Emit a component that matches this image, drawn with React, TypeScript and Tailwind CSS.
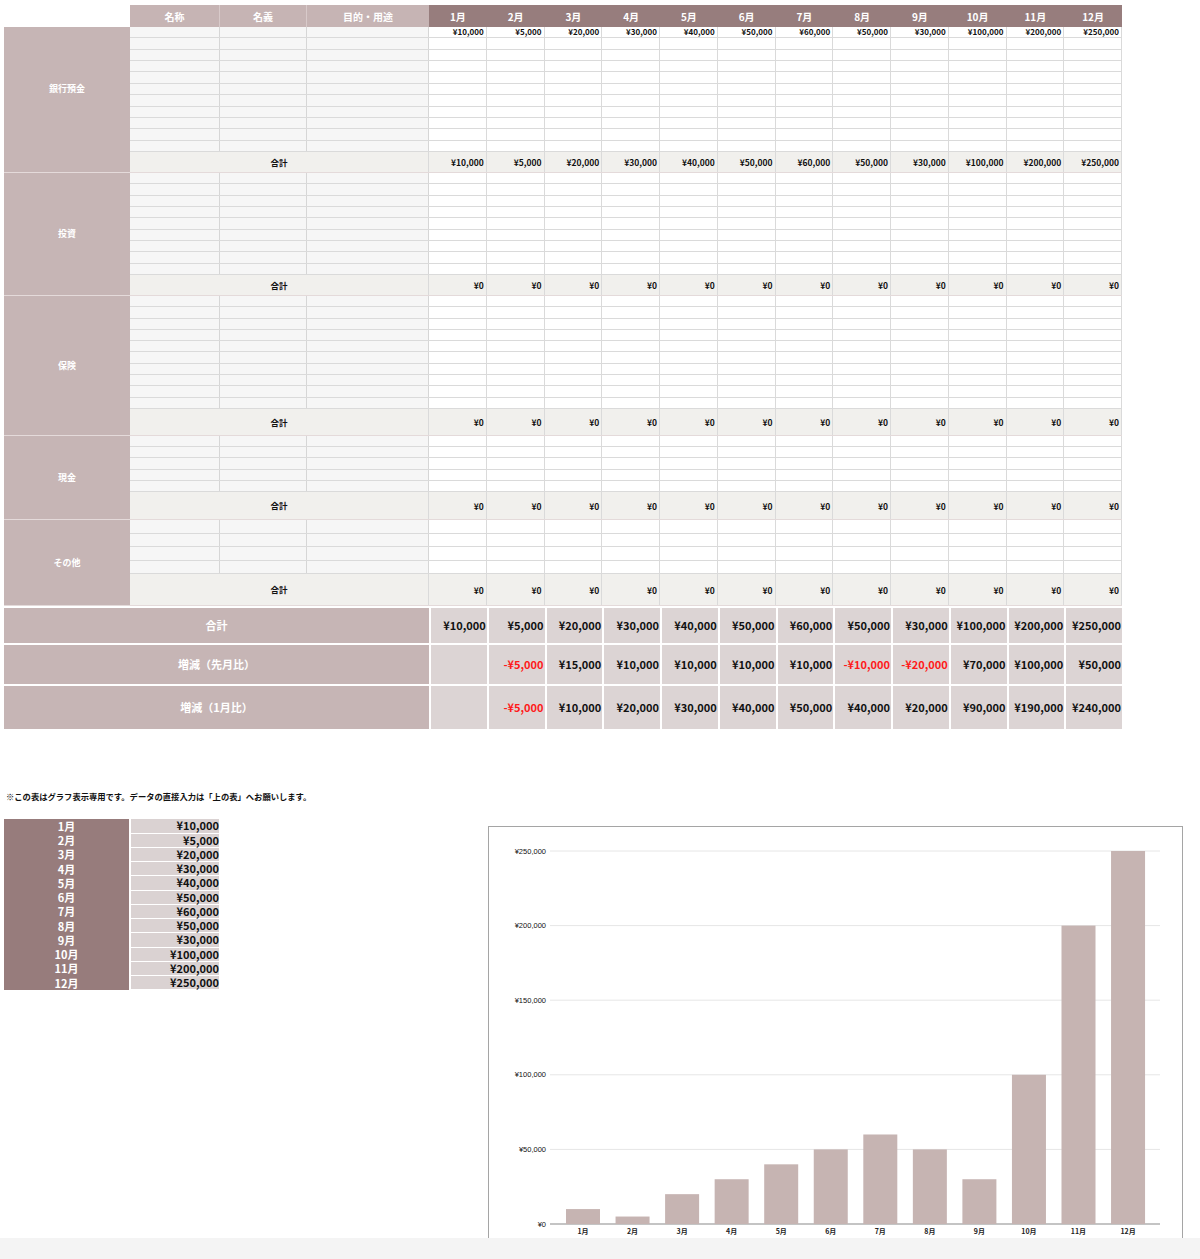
import React from 'react';

const months = ['1月', '2月', '3月', '4月', '5月', '6月', '7月', '8月', '9月', '10月', '11月', '12月'];
const values = [10000, 5000, 20000, 30000, 40000, 50000, 60000, 50000, 30000, 100000, 200000, 250000];

const yen = (v: number) => (v < 0 ? '-' : '') + '¥' + Math.abs(v).toLocaleString('en-US');

const diffPrev = values.map((v, i) => (i === 0 ? null : v - values[i - 1]));
const diffJan = values.map((v, i) => (i === 0 ? null : v - values[0]));

type Section = {
  label: string;
  rows: number;
  rowH: string;
  totalH: string;
  labelPad?: string;
  first?: number[];
};

const sections: Section[] = [
  { label: '銀行預金', rows: 11, rowH: 'h-[11.36px]', totalH: 'h-[20px]', labelPad: 'pb-[21px]', first: values },
  { label: '投資', rows: 9, rowH: 'h-[11.33px]', totalH: 'h-[20px]' },
  { label: '保険', rows: 10, rowH: 'h-[11.3px]', totalH: 'h-[26px]' },
  { label: '現金', rows: 5, rowH: 'h-[11.3px]', totalH: 'h-[27px]' },
  { label: 'その他', rows: 4, rowH: 'h-[13.5px]', totalH: 'h-[31px]' },
];

const font = { fontFamily: '"Noto Sans CJK JP", "Noto Sans", sans-serif' };

function HeaderRow() {
  return (
    <div className="flex h-[22px] text-[10px] font-bold text-white">
      <div className="w-[126px]" />
      <div className="w-[90px] bg-[#c6b4b4] border-r border-[#d8caca] flex items-center justify-center">名称</div>
      <div className="w-[87px] bg-[#c6b4b4] border-r border-[#d8caca] flex items-center justify-center">名義</div>
      <div className="w-[122px] bg-[#c6b4b4] flex items-center justify-center">目的・用途</div>
      {months.map((m) => (
        <div key={m} className="w-[57.75px] bg-[#977d7d] flex items-center justify-center">
          {m}
        </div>
      ))}
    </div>
  );
}

function SectionBlock({ s }: { s: Section }) {
  const rows = Array.from({ length: s.rows }, (_, i) => i);
  const totals = s.first ?? months.map(() => 0);
  return (
    <div className="flex border-b border-[#e4dada]">
      <div
        className={`w-[126px] bg-[#c6b5b5] flex items-center justify-center text-[9px] font-bold text-white ${s.labelPad ?? ''}`}
      >
        {s.label}
      </div>
      <div className="flex flex-col">
        {rows.map((r) => (
          <div key={r} className={`flex ${s.rowH} border-b border-[#dadada]`}>
            <div className="w-[90px] bg-[#f6f6f6] border-r border-[#d6d6d6]" />
            <div className="w-[87px] bg-[#f6f6f6] border-r border-[#d6d6d6]" />
            <div className="w-[122px] bg-[#f6f6f6] border-r border-[#d6d6d6]" />
            {months.map((m, i) => (
              <div
                key={m}
                className="w-[57.75px] bg-white border-r border-[#dadada] flex items-center justify-end pr-[2px] text-[8px] font-bold leading-none text-[#111]"
              >
                {r === 0 && s.first ? yen(s.first[i]) : ''}
              </div>
            ))}
          </div>
        ))}
        <div className={`flex ${s.totalH} bg-[#f1f0ed] text-[8.5px] font-bold text-[#111]`}>
          <div className="w-[299px] border-r border-[#dadada] flex items-center justify-center">合計</div>
          {totals.map((v, i) => (
            <div
              key={i}
              className="w-[57.75px] border-r border-[#dadada] flex items-center justify-end pr-[2px] leading-none"
            >
              {yen(v)}
            </div>
          ))}
        </div>
      </div>
    </div>
  );
}

function SummaryRow({ label, data, h }: { label: string; data: (number | null)[]; h: string }) {
  return (
    <div className={`flex ${h} border-t-2 border-white text-[11px] font-bold`}>
      <div className="w-[425px] bg-[#c6b5b5] text-white flex items-center justify-center pb-[1px]">{label}</div>
      {data.map((v, i) => (
        <div
          key={i}
          className={`w-[57.75px] bg-[#dcd4d4] border-l-2 border-white flex items-center justify-end pr-[1px] pb-[1px] ${
            v !== null && v < 0 ? 'text-[#ff1a1a]' : 'text-[#111]'
          }`}
        >
          {v === null ? '' : yen(v)}
        </div>
      ))}
    </div>
  );
}

function MonthList() {
  return (
    <div className="flex gap-[2px] mt-[17px] text-[11px] font-bold">
      <div className="w-[125px] bg-[#977c7c] flex flex-col text-white">
        {months.map((m) => (
          <div key={m} className="h-[14.25px] flex items-center justify-center leading-none">
            {m}
          </div>
        ))}
      </div>
      <div className="w-[88px] flex flex-col">
        {values.map((v, i) => (
          <div
            key={i}
            className="h-[14.25px] bg-[#dad2d2] border-b border-white flex items-center justify-end leading-none text-[#111]"
          >
            {yen(v)}
          </div>
        ))}
      </div>
    </div>
  );
}

function BarChart() {
  const top = 24;
  const base = 397;
  const range = base - top;
  const ticks = [250000, 200000, 150000, 100000, 50000, 0];
  return (
    <div className="mt-[36px] w-[695px] h-[440px] border border-[#a5a5a5] bg-white">
      <svg width="693" height="438" viewBox="0 0 693 438">
        {ticks.map((t) => {
          const y = base - (t / 250000) * range;
          return (
            <g key={t}>
              <line
                x1={61}
                x2={671}
                y1={y}
                y2={y}
                stroke={t === 0 ? '#8a8a8a' : '#e6e6e6'}
                strokeWidth={t === 0 ? 1.2 : 1}
              />
              <text
                x={57}
                y={y + 2.5}
                textAnchor="end"
                fontSize="7.5"
                fill="#111"
                fontFamily='"Liberation Sans", Arial, sans-serif'
              >
                {yen(t)}
              </text>
            </g>
          );
        })}
        {values.map((v, i) => {
          const cx = 94 + i * 49.55;
          const h = (v / 250000) * range;
          return (
            <g key={i}>
              <rect x={cx - 17} y={base - h} width={34} height={h} fill="#c6b4b2" />
              <text
                x={cx}
                y={base + 10}
                textAnchor="middle"
                fontSize="7"
                fontWeight="bold"
                fill="#222"
                fontFamily='"Noto Sans CJK JP", sans-serif'
              >
                {months[i]}
              </text>
            </g>
          );
        })}
      </svg>
    </div>
  );
}

export default function App() {
  return (
    <div className="relative w-[1200px] h-[1259px] overflow-hidden bg-white" style={font}>
      <div className="pt-[5px] pl-[4px]">
        <div className="w-[1118px]">
          <HeaderRow />
          {sections.map((s) => (
            <SectionBlock key={s.label} s={s} />
          ))}
          <SummaryRow label="合計" data={values} h="h-[37px]" />
          <SummaryRow label="増減（先月比）" data={diffPrev} h="h-[41px]" />
          <SummaryRow label="増減（1月比）" data={diffJan} h="h-[45px]" />
        </div>
      </div>

      <div className="flex mt-[61px]">
        <div className="w-[488px] pl-[4px]">
          <p className="pl-[2px] text-[8.3px] font-bold leading-[12px] text-[#111]">
            ※この表はグラフ表示専用です。データの直接入力は「上の表」へお願いします。
          </p>
          <MonthList />
        </div>
        <BarChart />
      </div>

      <div className="absolute bottom-0 left-0 right-0 h-[21px] bg-[#f4f4f4]" />
    </div>
  );
}
